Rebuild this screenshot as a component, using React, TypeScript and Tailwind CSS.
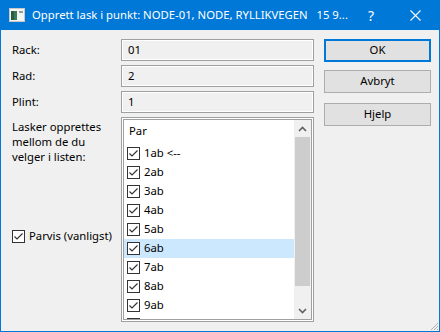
import React from 'react';

const font = { fontFamily: '"Noto Sans", "Liberation Sans", sans-serif' };

function Check() {
  return (
    <span className="inline-flex w-[13px] h-[13px] border border-[#333333] bg-white items-center justify-center shrink-0">
      <svg width="11" height="11" viewBox="0 0 11 11">
        <path d="M1.5 5.5 L4 8 L9.5 2.5" fill="none" stroke="#333333" strokeWidth="1.2" />
      </svg>
    </span>
  );
}

function Field({ label, value }: { label: string; value: string }) {
  return (
    <div className="flex items-center h-[22px] mb-[4px]">
      <div className="w-[109px] text-[11.3px] text-black">{label}</div>
      <div className="w-[193px] h-[22px] border border-[#a0a0a0] shadow-[inset_0_0_0_1px_#ffffff] bg-[#f0f0f0] px-[6px] flex items-center text-[11.3px] text-black">
        {value}
      </div>
    </div>
  );
}

function Btn({ label, primary }: { label: string; primary?: boolean }) {
  return (
    <div
      className={`w-[107px] h-[23px] flex items-center justify-center text-[11.3px] text-black bg-[#e1e1e1] ${
        primary ? 'border-2 border-[#0078d7]' : 'border border-[#adadad]'
      }`}
    >
      {label}
    </div>
  );
}

export default function App() {
  const items = ['1ab <--', '2ab', '3ab', '4ab', '5ab', '6ab', '7ab', '8ab', '9ab', '10ab'];

  return (
    <div className="w-[440px] h-[332px] border border-[#0078d7] border-t-0 bg-[#f0f0f0] flex flex-col overflow-hidden" style={font}>
      {/* Title bar */}
      <div className="h-[30px] bg-[#0078d7] text-white flex items-center shrink-0">
        <svg width="16" height="14" viewBox="0 0 16 14" className="ml-[8px] mr-[7px]">
          <rect x="0.5" y="0.5" width="15" height="13" fill="#f4f4f4" stroke="#c8c8c8" />
          <rect x="2" y="3" width="6" height="9" fill="#3a7a5a" />
          <rect x="2" y="3" width="3" height="9" fill="#2a5a44" />
          <rect x="10" y="3" width="4" height="2" fill="#9a9a9a" />
        </svg>
        <span className="text-[11.3px] whitespace-pre">Opprett lask i punkt: NODE-01, NODE, RYLLIKVEGEN   15 9...</span>
        <span className="ml-auto text-[14px] w-[20px] text-center mr-[29px]">?</span>
        <svg width="11" height="11" viewBox="0 0 11 11" className="mr-[18px]">
          <path d="M0.5 0.5 L10.5 10.5 M10.5 0.5 L0.5 10.5" stroke="#ffffff" strokeWidth="1.1" />
        </svg>
      </div>

      {/* Body */}
      <div className="flex flex-1 pl-[11px] pt-[9px] relative">
        <div className="flex flex-col w-[302px]">
          <Field label="Rack:" value="01" />
          <Field label="Rad:" value="2" />
          <Field label="Plint:" value="1" />

          <div className="flex">
            <div className="w-[109px] flex flex-col text-[11.3px] text-black">
              <div className="leading-[15px] pt-[2px]">
                Lasker opprettes
                <br />
                mellom de du
                <br />
                velger i listen:
              </div>
              <div className="flex items-center gap-[4px] mt-[64px]">
                <Check />
                <span>Parvis (vanligst)</span>
              </div>
            </div>

            <div className="w-[193px] h-[205px] border border-[#a0a0a0] bg-white p-px">
              <div className="border border-[#a0a0a0] h-full flex overflow-hidden">
                <div className="flex-1 flex flex-col text-[11.3px] text-black">
                  <div className="h-[24px] pl-[5px] pt-[4px] leading-[14px] shrink-0">Par</div>
                  {items.map((it) => (
                    <div
                      key={it}
                      className={`h-[19px] flex items-center gap-[4px] pl-[3px] shrink-0 ${it === '6ab' ? 'bg-[#cce8ff]' : ''}`}
                    >
                      <Check />
                      <span>{it}</span>
                    </div>
                  ))}
                </div>
                <div className="w-[17px] bg-[#f0f0f0] flex flex-col">
                  <div className="h-[17px] flex items-center justify-center">
                    <svg width="9" height="6" viewBox="0 0 9 6">
                      <path d="M1 5 L4.5 1.5 L8 5" fill="none" stroke="#606060" strokeWidth="1.6" />
                    </svg>
                  </div>
                  <div className="mx-px h-[149px] bg-[#cdcdcd]" />
                  <div className="flex-1" />
                  <div className="h-[17px] flex items-center justify-center">
                    <svg width="9" height="6" viewBox="0 0 9 6">
                      <path d="M1 1 L4.5 4.5 L8 1" fill="none" stroke="#606060" strokeWidth="1.6" />
                    </svg>
                  </div>
                </div>
              </div>
            </div>
          </div>
        </div>

        <div className="flex flex-col ml-[10px]">
          <Btn label="OK" primary />
          <div className="mt-[8px]">
            <Btn label="Avbryt" />
          </div>
          <div className="mt-[10px]">
            <Btn label="Hjelp" />
          </div>
        </div>

        {/* resize grip */}
        <svg width="10" height="10" viewBox="0 0 10 10" className="absolute right-0 bottom-0">
          <path d="M9 2 L2 9 M9 5 L5 9 M9 8 L8 9" stroke="#b0b0b0" strokeWidth="1" />
        </svg>
      </div>
    </div>
  );
}
